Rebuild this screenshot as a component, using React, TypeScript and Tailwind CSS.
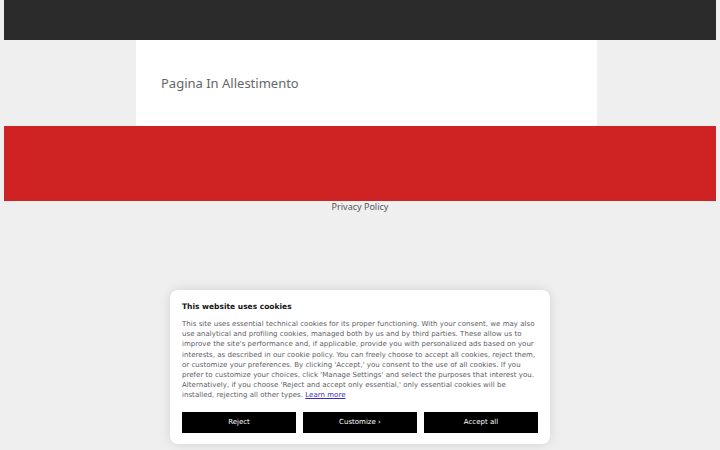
import React from 'react';

const CookieBanner: React.FC = () => {
  return (
    <div className="absolute left-[170px] top-[290px] w-[380px] rounded-lg bg-white px-3 pt-[11px] pb-[11px] shadow-[0_0_12px_rgba(0,0,0,0.12)]">
      <h3 className="text-[7.5px] font-bold text-[#111] leading-[12px]">This website uses cookies</h3>
      <p className="mt-[6px] text-[7px] leading-[10.2px] tracking-[0.03px] text-[#5c5c66]">
        This site uses essential technical cookies for its proper functioning. With your consent, we may also use analytical and profiling cookies, managed both by us and by third parties. These allow us to improve the site's performance and, if applicable, provide you with personalized ads based on your interests, as described in our cookie policy. You can freely choose to accept all cookies, reject them, or customize your preferences. By clicking 'Accept,' you consent to the use of all cookies. If you prefer to customize your choices, click 'Manage Settings' and select the purposes that interest you. Alternatively, if you choose 'Reject and accept only essential,' only essential cookies will be installed, rejecting all other types.{' '}
        <a href="#" className="text-[#3b2bb8] underline">Learn more</a>
      </p>
      <div className="mt-[11px] grid grid-cols-3 gap-[7px]">
        <button className="h-[21px] bg-black text-[7px] text-white">Reject</button>
        <button className="h-[21px] bg-black text-[7px] text-white">Customize &#8250;</button>
        <button className="h-[21px] bg-black text-[7px] text-white">Accept all</button>
      </div>
    </div>
  );
};

const App: React.FC = () => {
  return (
    <div className="relative min-h-[450px] bg-[#efefef] font-['DejaVu_Sans',sans-serif]">
      <header className="mx-[4px] h-[40px] bg-[#2b2b2b]" />
      <main className="ml-[136px] h-[86px] w-[461px] bg-white pl-[25px] pt-[34px]">
        <h1 className="font-['Noto_Sans',sans-serif] text-[13px] text-[#666]">Pagina In Allestimento</h1>
      </main>
      <footer className="mx-[4px] h-[75px] bg-[#cf2323]" />
      <div className="text-center font-['Noto_Sans',sans-serif] text-[9px] leading-[11px] text-[#555]">Privacy Policy</div>
      <CookieBanner />
    </div>
  );
};

export default App;
